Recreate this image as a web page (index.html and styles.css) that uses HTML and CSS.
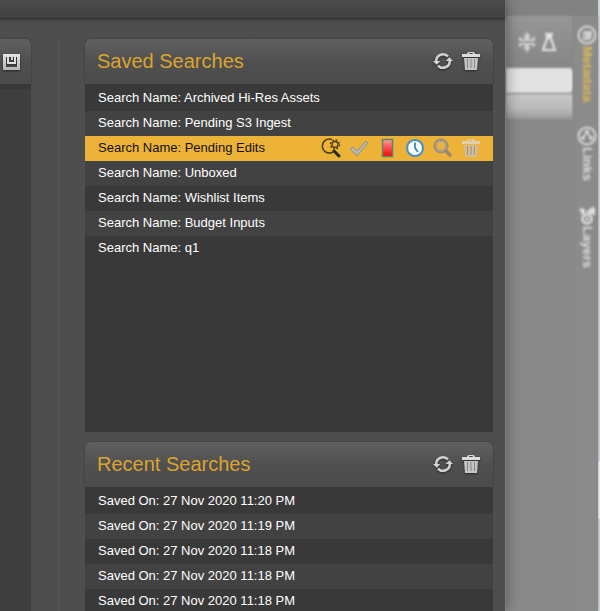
FILE: index.html
```
<!DOCTYPE html>
<html lang="en">

<head>
    <meta charset="UTF-8">
    <meta name="viewport" content="width=device-width, initial-scale=1.0">
    <title>Searches</title>
    <link rel="stylesheet" href="styles.css">
</head>

<body>
    <!-- shared icons -->
    <svg class="defs" aria-hidden="true">
        <defs>
            <linearGradient id="metal" x1="0" y1="0" x2="0" y2="1">
                <stop offset="0" stop-color="#e6e6e6" />
                <stop offset="1" stop-color="#b4b4b4" />
            </linearGradient>
            <linearGradient id="red" x1="0" y1="0" x2="0" y2="1">
                <stop offset="0" stop-color="#ff9c9c" />
                <stop offset="1" stop-color="#ff0000" />
            </linearGradient>
            <symbol id="refresh" viewBox="0 0 22 22">
                <path d="M3.500 11A7.500 7.500 0 0 1 16.500 6M18.500 11A7.500 7.500 0 0 1 5.500 16" fill="none" stroke="#d0d0d0" stroke-width="2.800" />
                <path d="M0 11h8l-4 4zM14 11h8l-4-4z" fill="#d6d6d6" />
            </symbol>
            <symbol id="trash" viewBox="0 0 20 20">
                <path d="M6 3q0-2 2-2h4q2 0 2 2h5v3H1V3zm2 0h4q0-1-1-1H9q-1 0-1 1z" fill="#dcdcdc" />
                <path d="M3 7h14l-1 12H4z" fill="#c4c4c4" />
                <path d="M6.500 8v9M10 8v9M13.500 8v9" stroke="#858585" stroke-width="1" />
            </symbol>
        </defs>
    </svg>

    <div class="page">
        <div class="dialog">
            <div class="titlebar"></div>
            <div class="content">
                <section class="panel form">
                    <div class="head">
                        <button type="button" aria-label="Save search">
                            <svg viewBox="0 0 20 20">
                                <path d="M2 2h17v16H2zM5 5v10h11V5z" fill="url(#metal)" fill-rule="evenodd" />
                                <path d="M6 4h2v6h5V4h2v8H6z" fill="#dedede" />
                                <path d="M10 4h2v4h-2z" fill="#d8d8d8" />
                            </svg>
                        </button>
                    </div>
                    <div class="fields"></div>
                </section>
                <div class="lists">
                    <section class="panel saved">
                        <div class="head">
                            <h2>Saved Searches</h2>
                            <button type="button" aria-label="Refresh saved searches"><svg viewBox="0 0 22 22"><use href="#refresh" /></svg></button>
                            <button type="button" aria-label="Delete saved searches"><svg viewBox="0 0 20 20"><use href="#trash" /></svg></button>
                        </div>
                        <ul>
                            <li>Search Name: Archived Hi-Res Assets</li>
                            <li>Search Name: Pending S3 Ingest</li>
                            <li class="active">
                                <span>Search Name: Pending Edits</span>
                                <button type="button" aria-label="Edit search">
                                    <svg viewBox="0 0 20 20">
                                        <path d="M11 1.500A7 7 0 1 0 12 14" fill="none" stroke="#4a3f22" stroke-width="1.500" />
                                        <path d="M13 13l5 5" stroke="#2b271c" stroke-width="3" stroke-linecap="round" />
                                        <circle cx="14" cy="6.500" r="4.500" fill="none" stroke="#4a3f22" stroke-width="1.500" stroke-dasharray="1.800 1.734" />
                                        <circle cx="14" cy="6.500" r="3" fill="none" stroke="#4a3f22" stroke-width="1.300" />
                                    </svg>
                                </button>
                                <button type="button" aria-label="Apply">
                                    <svg viewBox="0 0 20 20">
                                        <path d="M1 11l3-2 4 4L17 3l2 2L8 18z" fill="#b8b6b0" stroke="#96917f" stroke-width="1" />
                                    </svg>
                                </button>
                                <button type="button" aria-label="Colour">
                                    <svg viewBox="0 0 20 20">
                                        <rect x="5.500" y="1.500" width="10" height="17" fill="url(#red)" stroke="#59866f" stroke-width="1.500" />
                                    </svg>
                                </button>
                                <button type="button" aria-label="Schedule">
                                    <svg viewBox="0 0 20 20">
                                        <circle cx="10" cy="10" r="8" fill="#fff" stroke="#4591c9" stroke-width="2.200" />
                                        <path d="M10 4.500V10l3 4" fill="none" stroke="#3385c3" stroke-width="1.800" />
                                    </svg>
                                </button>
                                <button type="button" aria-label="Run search">
                                    <svg viewBox="0 0 20 20">
                                        <circle cx="8" cy="8" r="5.500" fill="none" stroke="#aaa08a" stroke-width="3" />
                                        <circle cx="8" cy="8" r="7" fill="none" stroke="#918570" stroke-width="1" />
                                        <path d="M13 13l4 4" stroke="#948871" stroke-width="3.500" stroke-linecap="round" />
                                    </svg>
                                </button>
                                <button type="button" class="faded" aria-label="Delete search"><svg viewBox="0 0 20 20"><use href="#trash" /></svg></button>
                            </li>
                            <li>Search Name: Unboxed</li>
                            <li>Search Name: Wishlist Items</li>
                            <li>Search Name: Budget Inputs</li>
                            <li>Search Name: q1</li>
                        </ul>
                    </section>
                    <section class="panel recent">
                        <div class="head">
                            <h2>Recent Searches</h2>
                            <button type="button" aria-label="Refresh recent searches"><svg viewBox="0 0 22 22"><use href="#refresh" /></svg></button>
                            <button type="button" aria-label="Delete recent searches"><svg viewBox="0 0 20 20"><use href="#trash" /></svg></button>
                        </div>
                        <ul>
                            <li>Saved On: 27 Nov 2020 11:20 PM</li>
                            <li>Saved On: 27 Nov 2020 11:19 PM</li>
                            <li>Saved On: 27 Nov 2020 11:18 PM</li>
                            <li>Saved On: 27 Nov 2020 11:18 PM</li>
                            <li>Saved On: 27 Nov 2020 11:18 PM</li>
                        </ul>
                    </section>
                </div>
            </div>
        </div>

        <!-- dimmed page behind the dialog -->
        <div class="behind">
            <div class="workspace">
                <div class="tools">
                    <svg viewBox="0 0 16 20">
                        <path d="M1 5v3h14V5M1 15v-3h14v3M8 0v7M8 20v-7" fill="none" stroke="#d8d8d8" stroke-width="1.800" />
                        <path d="M4 3h8L8 8zM4 17h8l-4-5z" fill="#d8d8d8" />
                    </svg>
                    <svg viewBox="0 0 16 20">
                        <path d="M4 2h8M6 3v4L2 18h12L10 7V3" fill="none" stroke="#e2e2e2" stroke-width="2.200" />
                        <path d="M5 2h6v5H5z" fill="#e2e2e2" />
                    </svg>
                </div>
                <div class="box"></div>
                <div class="strip"></div>
            </div>
            <nav>
                <a href="#metadata" class="on">
                    <svg viewBox="0 0 20 20">
                        <circle cx="10" cy="10" r="8.500" fill="none" stroke="#d8d8d8" stroke-width="2" />
                        <path d="M6 6h9v6l-3 3H6z" fill="#d0d0d0" />
                        <path d="M8 8v5" stroke="#9a9a9a" />
                    </svg>
                    Metadata
                </a>
                <a href="#links">
                    <svg viewBox="0 0 20 20">
                        <circle cx="10" cy="10" r="8.500" fill="none" stroke="#d8d8d8" stroke-width="2" />
                        <path d="M6 12l4-6 4 6" fill="none" stroke="#d8d8d8" stroke-width="1.500" />
                        <circle cx="10" cy="6" r="2" fill="#dcdcdc" />
                        <circle cx="6" cy="12" r="2" fill="#dcdcdc" />
                        <circle cx="14" cy="12" r="2" fill="#dcdcdc" />
                    </svg>
                    Links
                </a>
                <a href="#layers">
                    <svg viewBox="0 0 20 20">
                        <path d="M9 7l6-5 3 1v7l-5-1zM2 3l6 1v4l-3 2z" fill="#dedede" />
                        <ellipse cx="10" cy="14" rx="4.500" ry="4.500" fill="none" stroke="#e0e0e0" stroke-width="2.500" />
                        <path d="M10 12v4" stroke="#e0e0e0" stroke-width="2" />
                    </svg>
                    Layers
                </a>
            </nav>
        </div>
        <div class="scrollbar"><i></i></div>
    </div>
</body>

</html>
```
FILE: styles.css
```
* {
    margin: 0;
    padding: 0;
    box-sizing: border-box;
}

body {
    font-family: "Liberation Sans", Arial, sans-serif;
    font-size: 13px;
    color: #fff;
    background: #8a8a8a;
}

.defs {
    position: absolute;
    width: 0;
    height: 0;
}

.page {
    display: grid;
    grid-template-columns: 1fr 92px 2px;
    height: 100vh;
    overflow: hidden;
}

/* dialog */
.dialog {
    position: relative;
    z-index: 1;
    display: flex;
    flex-direction: column;
    min-height: 0;
    background: #4e4e4e;
    border-right: 1px solid #7c7c7c;
    box-shadow: 0 0 14px rgba(0, 0, 0, .4);
}

.titlebar {
    flex: none;
    height: 19px;
    background: linear-gradient(#4b4b4b, #424242);
    border-bottom: 1px solid #333;
    box-shadow: 0 1px 3px rgba(0, 0, 0, .3);
}

.content {
    flex: 1;
    display: flex;
    min-height: 0;
    padding: 20px 12px 0 0;
}

.form {
    flex: none;
    display: flex;
    flex-direction: column;
    width: 31px;
}

.fields {
    flex: 1;
    background: #3e3e3e;
    border-top: 5px solid #383838;
}

.lists {
    flex: 1;
    margin-left: 27px;
    padding-left: 26px;
    border-left: 1px solid #585858;
}

.head {
    display: flex;
    align-items: center;
    gap: 8px;
    height: 45px;
    padding: 0 12px 1px;
    background: linear-gradient(#606060, #505050 50%, #4b4b4b);
    border-radius: 6px 6px 0 0;
    box-shadow: 0 0 2px rgba(0, 0, 0, .4);
}

.form .head {
    justify-content: flex-end;
    padding: 0 10px 0 0;
    border-radius: 0 6px 0 0;
}

.head h2 {
    flex: 1;
    font-size: 20px;
    font-weight: normal;
    color: #dca42e;
}

button {
    flex: none;
    width: 20px;
    height: 20px;
    border: none;
    background: none;
    cursor: pointer;
}

button svg {
    display: block;
    width: 100%;
    height: 100%;
}

.head svg {
    filter: drop-shadow(0 1px 1px rgba(0, 0, 0, .5));
}

.faded {
    opacity: .7;
}

.panel ul {
    padding-top: 2px;
    list-style: none;
    background: #393939;
}

.saved ul {
    height: 348px;
}

.recent {
    margin-top: 10px;
}

.panel li {
    display: flex;
    align-items: center;
    gap: 8px;
    height: 25px;
    padding: 0 12px 2px 13px;
}

.panel li:nth-child(even) {
    background: #424242;
}

.panel li.active {
    color: #111;
    background: #edb238;
}

.active span {
    flex: 1;
}

/* page behind */
.behind {
    display: flex;
    padding-top: 16px;
    background: linear-gradient(#828282 16px, #8a8a8a 16px);
}

.workspace {
    flex: 1;
    filter: blur(1px);
}

.tools {
    display: flex;
    align-items: center;
    justify-content: flex-end;
    gap: 6px;
    height: 52px;
    padding-right: 16px;
    background: linear-gradient(#969696, #868686);
}

.tools svg {
    width: 16px;
    height: 20px;
}

.box {
    height: 25px;
    background: #e2e2e2;
    border-radius: 0 4px 4px 0;
    box-shadow: 0 1px 1px #707070;
}

.strip {
    height: 25px;
    margin-top: 1px;
    background: linear-gradient(#c8c8c8, #bababa 60%, #999);
}

nav {
    display: flex;
    flex-direction: column;
    gap: 24px;
    width: 25px;
    padding: 9px 0 0 2px;
    background: #8b8b8b;
    border-left: 1px solid #868686;
    filter: blur(1px);
}

nav a {
    display: flex;
    align-items: center;
    gap: 1px;
    writing-mode: vertical-rl;
    font-weight: bold;
    color: #dedede;
    text-decoration: none;
}

nav a.on {
    color: #e2bb55;
}

nav svg {
    width: 20px;
    height: 20px;
}

.scrollbar {
    padding-top: 461px;
    background: #cfd3d7;
}

.scrollbar i {
    display: block;
    height: 58px;
    background: #f2f2f2;
}
```
